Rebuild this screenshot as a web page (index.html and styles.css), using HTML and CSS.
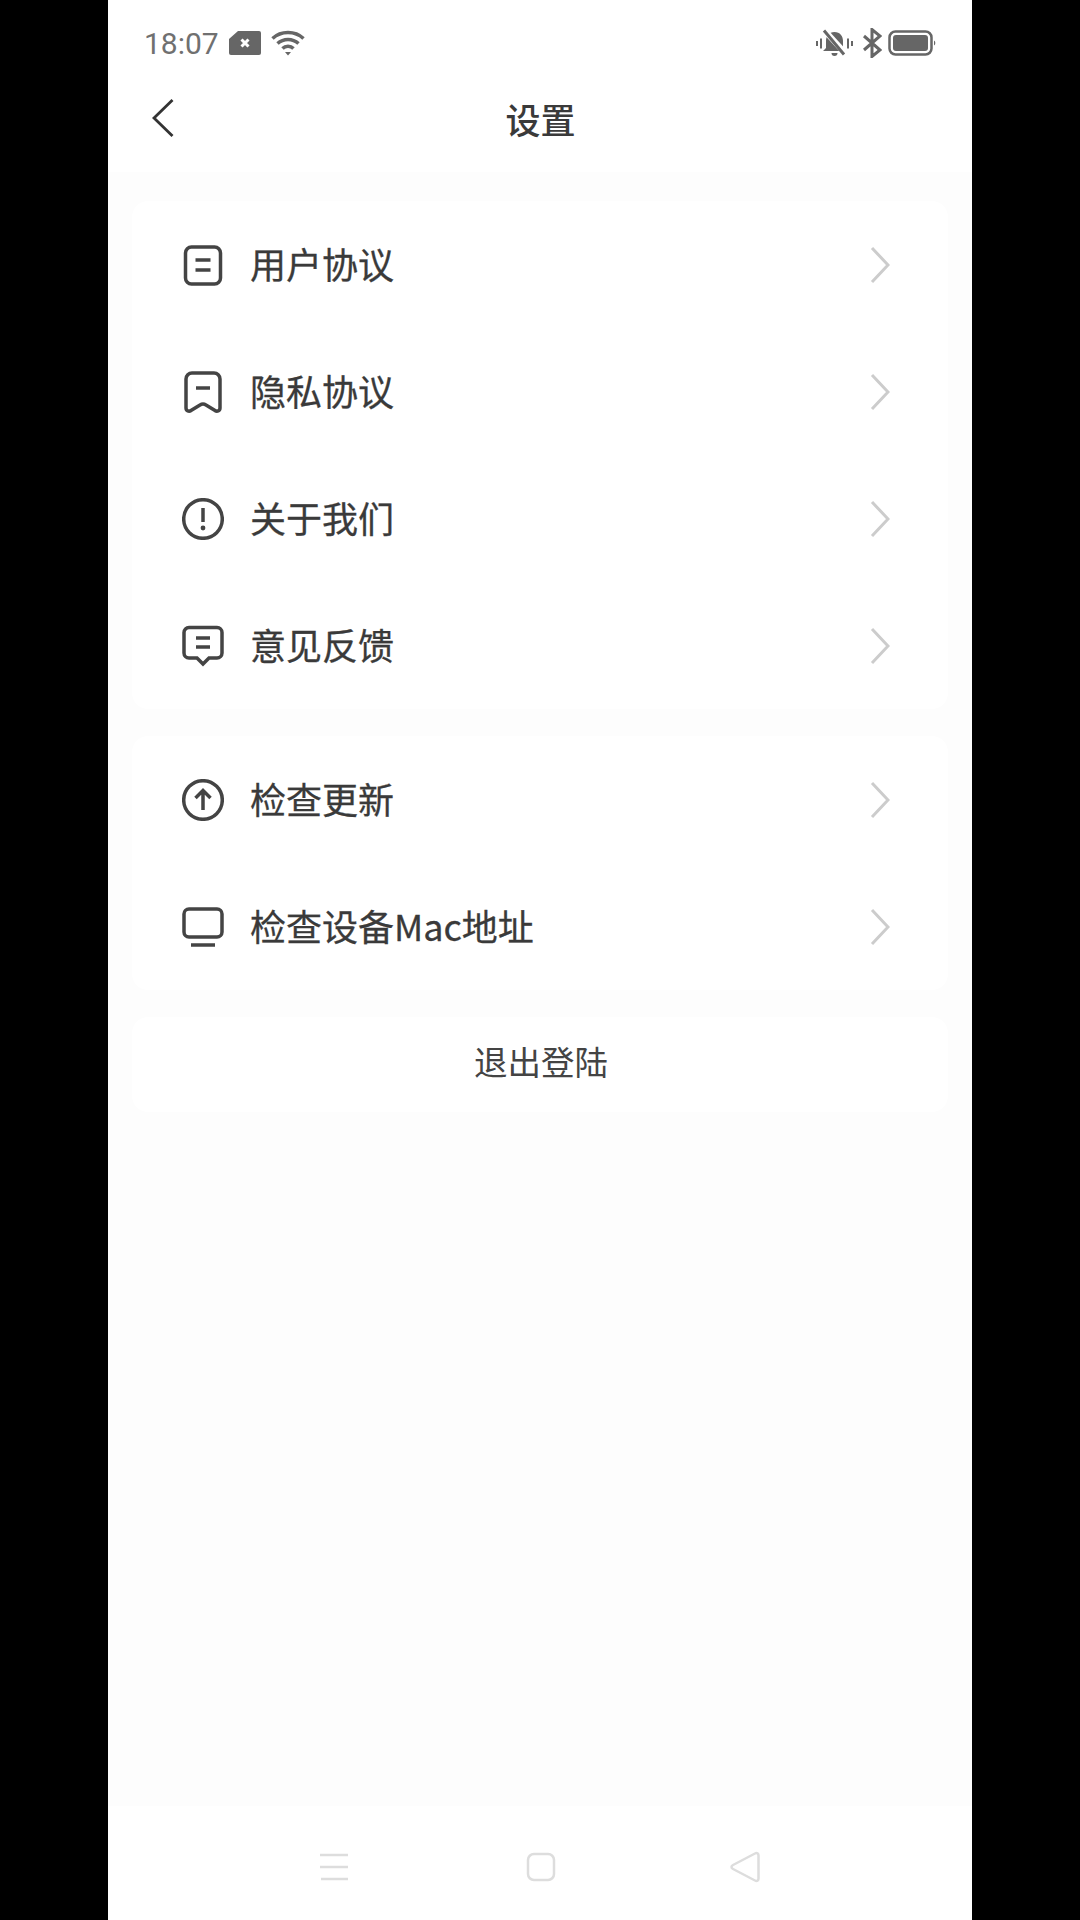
FILE: index.html
```html
<!DOCTYPE html>
<html lang="zh-CN">
<head>
    <meta charset="UTF-8">
    <meta name="viewport" content="width=device-width, initial-scale=1.0">
    <title>设置</title>
    <link rel="stylesheet" href="styles.css">
</head>
<body>
    <div class="phone">
        <div class="top-area">
            <div class="status-bar">
                <div class="status-group">
                    <span class="time">18:07</span>
                    <svg class="sim" width="32" height="24" viewBox="0 0 32 24">
                        <path d="M9 0H30a2 2 0 0 1 2 2V22a2 2 0 0 1-2 2H2a2 2 0 0 1-2-2V8z" fill="#666"/>
                        <path d="M12.500 8.500l7 7M19.500 8.500l-7 7" stroke="#fff" stroke-width="3"/>
                    </svg>
                    <svg class="wifi" width="34" height="26" viewBox="0 0 34 26" fill="none" stroke="#666" stroke-width="3.500">
                        <path d="M1.500 8.500C10 .5 24 .5 32.500 8.500"/>
                        <path d="M6.500 13.500C12.500 8 21.500 8 27.500 13.500"/>
                        <path d="M11.500 18.500C14.500 15.500 19.500 15.500 22.500 18.500"/>
                        <path d="M14 22h6l-3 3.500z" fill="#666" stroke="none"/>
                    </svg>
                </div>
                <div class="status-group status-right">
                    <svg class="bell" width="37" height="28" viewBox="0 0 37 28">
                        <path d="M10 19V12c0-5 3-9 8.500-9S27 7 27 12v7l3 3H7z" fill="#666"/>
                        <path d="M15.500 24h6a3 3 0 0 1-6 0z" fill="#666"/>
                        <path d="M8 1l22 24" stroke="#fff" stroke-width="6"/>
                        <path d="M8 1.500l20 24" stroke="#666" stroke-width="3"/>
                        <path d="M1 12v5M5 9.500v10M32 9.500v10M36 12v5" stroke="#666" stroke-width="2"/>
                    </svg>
                    <svg class="bluetooth" width="19" height="30" viewBox="0 0 19 30" fill="none" stroke="#666" stroke-width="3">
                        <path d="M1 8l16 14-8 6.500V1.500l8 6.500L1 22"/>
                    </svg>
                    <svg class="battery" width="48" height="26" viewBox="0 0 48 26">
                        <rect x="1.500" y="1.500" width="42" height="23" rx="6" fill="none" stroke="#666" stroke-width="2.500"/>
                        <rect x="5" y="5" width="35" height="16" rx="3" fill="#666"/>
                        <path d="M46 10.500a3 3 0 0 1 0 5z" fill="#666"/>
                    </svg>
                </div>
            </div>
            <div class="title-bar">
                <svg class="back" width="22" height="40" viewBox="0 0 22 40" fill="none" stroke="#333" stroke-width="2.800">
                    <path d="M20.500 2L2 20l18.500 18"/>
                </svg>
                <h1>设置</h1>
            </div>
        </div>

        <div class="content">
            <div class="card">
                <div class="row">
                    <svg class="row-icon" width="42" height="42" viewBox="0 0 42 42" fill="none" stroke="#444" stroke-width="3.500">
                        <rect x="3.500" y="3" width="35" height="37" rx="6"/>
                        <path d="M13.500 16h15M13.500 26h15"/>
                    </svg>
                    <span class="row-label">用户协议</span>
                    <svg class="chevron" width="20" height="38" viewBox="0 0 20 38" fill="none" stroke="#ccc" stroke-width="3">
                        <path d="M2 2l16 17L2 36"/>
                    </svg>
                </div>
                <div class="row">
                    <svg class="row-icon" width="42" height="42" viewBox="0 0 42 42" fill="none" stroke="#444" stroke-width="3.500">
                        <path d="M4 8a6 6 0 0 1 6-6H32a6 6 0 0 1 6 6V37c0 3-3 4-5 2.500L24 34c-2-1.300-4-1.300-6 0L9 39.500C7 41 4 40 4 37z"/>
                        <path d="M14 17h14"/>
                    </svg>
                    <span class="row-label">隐私协议</span>
                    <svg class="chevron" width="20" height="38" viewBox="0 0 20 38" fill="none" stroke="#ccc" stroke-width="3">
                        <path d="M2 2l16 17L2 36"/>
                    </svg>
                </div>
                <div class="row">
                    <svg class="row-icon" width="42" height="42" viewBox="0 0 42 42" fill="none" stroke="#444" stroke-width="3.500">
                        <circle cx="21" cy="21" r="19.300"/>
                        <path d="M21 10v14"/>
                        <circle cx="21" cy="30" r="2.400" fill="#444" stroke="none"/>
                    </svg>
                    <span class="row-label">关于我们</span>
                    <svg class="chevron" width="20" height="38" viewBox="0 0 20 38" fill="none" stroke="#ccc" stroke-width="3">
                        <path d="M2 2l16 17L2 36"/>
                    </svg>
                </div>
                <div class="row">
                    <svg class="row-icon" width="42" height="42" viewBox="0 0 42 42" fill="none" stroke="#444" stroke-width="3.500">
                        <path d="M7 2.500H35a5 5 0 0 1 5 5V28a5 5 0 0 1-5 5H27l-6 6-6-6H7a5 5 0 0 1-5-5V7.500a5 5 0 0 1 5-5z"/>
                        <path d="M14 13h14M14 22h14"/>
                    </svg>
                    <span class="row-label">意见反馈</span>
                    <svg class="chevron" width="20" height="38" viewBox="0 0 20 38" fill="none" stroke="#ccc" stroke-width="3">
                        <path d="M2 2l16 17L2 36"/>
                    </svg>
                </div>
            </div>

            <div class="card">
                <div class="row">
                    <svg class="row-icon" width="42" height="42" viewBox="0 0 42 42" fill="none" stroke="#444" stroke-width="3.500">
                        <circle cx="21" cy="21" r="19.300"/>
                        <path d="M21 31V12M13.500 19l7.500-7.500 7.500 7.500"/>
                    </svg>
                    <span class="row-label">检查更新</span>
                    <svg class="chevron" width="20" height="38" viewBox="0 0 20 38" fill="none" stroke="#ccc" stroke-width="3">
                        <path d="M2 2l16 17L2 36"/>
                    </svg>
                </div>
                <div class="row">
                    <svg class="row-icon" width="42" height="42" viewBox="0 0 42 42" fill="none" stroke="#444" stroke-width="3.500">
                        <rect x="2" y="3" width="38" height="28" rx="5"/>
                        <path d="M9 39h24"/>
                    </svg>
                    <span class="row-label">检查设备Mac地址</span>
                    <svg class="chevron" width="20" height="38" viewBox="0 0 20 38" fill="none" stroke="#ccc" stroke-width="3">
                        <path d="M2 2l16 17L2 36"/>
                    </svg>
                </div>
            </div>

            <div class="card logout">退出登陆</div>
        </div>

        <div class="nav-bar">
            <svg width="30" height="28" viewBox="0 0 30 28" fill="none" stroke="#ddd" stroke-width="2.500">
                <path d="M1 2h28M1 14h28M2 26h27"/>
            </svg>
            <svg width="30" height="30" viewBox="0 0 30 30" fill="none" stroke="#ddd" stroke-width="2.500">
                <rect x="2" y="2" width="26" height="26" rx="6"/>
            </svg>
            <svg class="nav-back" width="30" height="32" viewBox="0 0 30 32" fill="none" stroke="#ddd" stroke-width="2.500">
                <path d="M25 2.500c2-1 3.500 0 3.500 2V27.500c0 2-1.500 3-3.500 2L3 18c-2-1-2-3 0-4z"/>
            </svg>
        </div>
    </div>
</body>
</html>
```

FILE: styles.css
```css
* {
    margin: 0;
    padding: 0;
    box-sizing: border-box;
}

body {
    background: #000;
    font-family: 'Noto Sans CJK SC', 'Noto Sans', sans-serif;
    color: #333;
}

.phone {
    width: 864px;
    height: 1920px;
    margin: 0 auto;
    background: #fdfdfd;
    display: flex;
    flex-direction: column;
}

.top-area {
    background: #fff;
    height: 172px;
}

.status-bar {
    height: 70px;
    padding: 16px 36px 0 36px;
    display: flex;
    justify-content: space-between;
    align-items: center;
}

.status-group {
    display: flex;
    align-items: center;
}

.time {
    font-family: Roboto, sans-serif;
    font-size: 30px;
    color: #707070;
    margin-right: 10px;
}

.wifi {
    margin-left: 10px;
}

.bluetooth {
    margin: 0 6px 0 10px;
}

.title-bar {
    height: 96px;
    position: relative;
    display: flex;
    align-items: center;
    justify-content: center;
}

.back {
    position: absolute;
    left: 44px;
    top: 28px;
}

.title-bar h1 {
    font-size: 35px;
    font-weight: 500;
    color: #3a3a3a;
    padding-left: 1px;
}

.content {
    flex: 1;
    padding: 29px 24px 0;
    display: flex;
    flex-direction: column;
    gap: 27px;
}

.card {
    background: #fff;
    border-radius: 16px;
}

.row {
    height: 127px;
    padding: 0 58px 0 50px;
    display: flex;
    align-items: center;
}

.row-label {
    flex: 1;
    margin-left: 26px;
    padding-bottom: 4px;
    font-size: 36px;
    color: #3a3a3a;
    -webkit-text-stroke: 0.3px #3a3a3a;
}

.logout {
    height: 95px;
    padding: 0 0 9px 2px;
    display: flex;
    align-items: center;
    justify-content: center;
    font-size: 33.500px;
    color: #444;
}

.nav-bar {
    height: 114px;
    padding-top: 8px;
    padding-right: 2px;
    background: #fff;
    display: flex;
    align-items: center;
    justify-content: center;
    gap: 177px;
}

.nav-back {
    margin-left: -3px;
}
```
